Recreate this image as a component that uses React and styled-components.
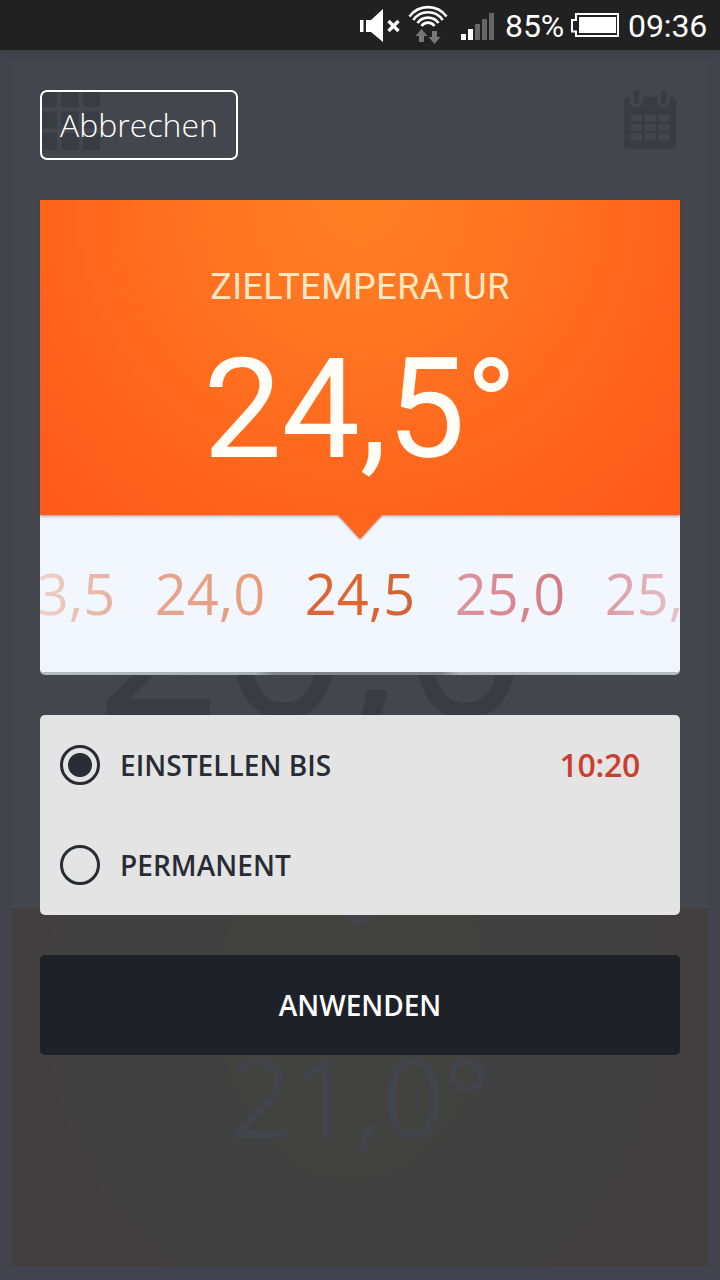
import React from "react";
import styled, { createGlobalStyle } from "styled-components";

const openSans = '"Open Sans", sans-serif';
const roboto = "Roboto, sans-serif";

const GlobalStyle = createGlobalStyle`
  * { box-sizing: border-box; }
  body { margin: 0; background: #42454d; }
  button { font: inherit; border: 0; padding: 0; }
`;

const Screen = styled.div`
  position: relative;
  width: 720px;
  height: 1280px;
  overflow: hidden;
  display: flex;
  flex-direction: column;
  background: #41444c;
  font-family: ${openSans};
`;

const StatusBar = styled.header`
  height: 50px;
  flex: none;
  display: flex;
  align-items: center;
  padding-left: 359px;
  background: #212121;
  color: #fff;
  font: 400 32px/50px ${roboto};
`;

const StatusIcons = styled.svg`
  flex: none;
  display: block;
`;

const StatusText = styled.span`
  flex: none;
  width: ${(p) => p.$width}px;
  padding-left: ${(p) => p.$inset || 0}px;
  padding-top: 3px;
  line-height: 47px;
  letter-spacing: -0.1px;
  white-space: nowrap;
`;

const Body = styled.main`
  position: relative;
  flex: 1;
`;

const Backdrop = styled.div`
  position: absolute;
  inset: 0;
  display: flex;
  flex-direction: column;
  padding: 12px 12px 13px;
  box-shadow: inset 0 5px 5px -3px #3d3f42;
`;

const RoomPanel = styled.section`
  height: 846px;
  flex: none;
  display: flex;
  flex-direction: column;
  border-radius: 6px 6px 0 0;
  background: #43464d;
  color: #393c43;
`;

const RoomToolbar = styled.div`
  display: flex;
  justify-content: space-between;
  padding: 28px 32px 0 28px;
`;

const RoomTemperature = styled.div`
  margin: 351px 0 0 84px;
  font-size: 220px;
  line-height: 260px;
  letter-spacing: -0.5px;
`;

const TargetPanel = styled.section`
  position: relative;
  flex: 1;
  background:
    radial-gradient(ellipse 135px 182px at 341px 92px, #42423f 96%, transparent 100%),
    radial-gradient(ellipse 310px 330px at 346px 92px, #414141 97%, #433f40 103%);
  color: #42444b;
  text-align: center;
`;

const PanelTip = styled.svg`
  position: absolute;
  left: 322px;
  top: 0;
`;

const TargetGhost = styled.div`
  padding-top: 112px;
  font-size: 110px;
  font-weight: 400;
  line-height: 150px;
  letter-spacing: -0.8px;
`;

const Dialog = styled.div`
  position: relative;
  display: flex;
  flex-direction: column;
  align-items: stretch;
  padding: 40px 40px 0;
`;

const CancelButton = styled.button`
  align-self: flex-start;
  width: 198px;
  height: 70px;
  margin-bottom: 40px;
  border: 2px solid #fff;
  border-radius: 7px;
  background: transparent;
  color: #fff;
  font: 300 32px/66px ${openSans};
`;

const Picker = styled.section`
  height: 475px;
  margin-bottom: 40px;
  display: flex;
  flex-direction: column;
`;

const PickerHead = styled.div`
  position: relative;
  height: 315px;
  flex: none;
  display: flex;
  flex-direction: column;
  align-items: center;
  background: radial-gradient(ellipse 420px 420px at 50% 0, #ff8024 0, #ff6c1f 55%, #ff5a1a 100%);
  box-shadow: 0 1px 3px rgba(110, 50, 30, 0.55);
`;

const PickerTitle = styled.h1`
  margin: 65px 0 0;
  color: #ffe9c4;
  font: 400 36px/44px ${roboto};
  letter-spacing: 0.45px;
`;

const PickerValue = styled.div`
  margin-top: 18px;
  color: #fffdf5;
  font: 400 140px/164px ${roboto};
  letter-spacing: -0.5px;
`;

const Pointer = styled.svg`
  position: absolute;
  left: 296px;
  top: 315px;
  filter: drop-shadow(0 1px 1px rgba(110, 50, 30, 0.5));
`;

const PickerTrack = styled.div`
  height: 160px;
  border-radius: 0 0 5px 5px;
  padding-bottom: 3px;
  overflow: hidden;
  background: linear-gradient(90deg, #b6bac2 0, #a9adb5 215px, #80838b 235px, #80838b 400px, #aeb1b9 420px, #b6bac2 100%);
`;

const PickerSurface = styled.div`
  height: 157px;
  background: #f2f6ff;
  border-radius: 0 0 3px 3px;
`;

const PickerStrip = styled.div`
  height: 157px;
  display: flex;
  justify-content: center;
  background: linear-gradient(
    90deg,
    #f0d0c8 0,
    #e6b2a2 70px,
    #e5a58f 120px,
    #e99c7a 220px,
    #d9663a 266px,
    #e2652c 310px,
    #cf6537 374px,
    #dd969e 416px,
    #d27a82 524px,
    #dc9ba3 566px,
    #e7c2ca 640px
  );
  background-clip: text;
  -webkit-background-clip: text;
  color: transparent;
`;

const PickerItem = styled.span`
  flex: 0 0 150px;
  text-align: center;
  font-size: 56px;
  line-height: 157px;
`;

const Options = styled.section`
  height: 200px;
  margin-bottom: 40px;
  border-radius: 5px;
  background: #e4e4e4;
  color: #282c34;
`;

const Option = styled.label`
  height: 100px;
  display: flex;
  align-items: center;
  padding: 0 40px 0 20px;
  font-size: 28px;
  font-weight: 600;
`;

const Radio = styled.span`
  width: 40px;
  height: 40px;
  margin-right: 20px;
  border: 3px solid #282c34;
  border-radius: 50%;
  background: ${(p) => (p.$checked ? "radial-gradient(circle, #282c34 11.5px, transparent 12.5px)" : "none")};
`;

const OptionLabel = styled.span`
  flex: 1;
  letter-spacing: 0.05px;
`;

const OptionTime = styled.span`
  color: #c9402f;
  font-size: 32px;
  letter-spacing: -0.3px;
  line-height: 42px;
`;

const ApplyButton = styled.button`
  height: 100px;
  border-radius: 5px;
  background: #1e2128;
  color: #fff;
  font: 600 28px/100px ${openSans};
`;

const NotificationIcons = () => (
  <StatusIcons width="146" height="50" viewBox="359 0 146 50" fill="#fff">
    <path d="M360 20h3.5v12H360zM366 20h5L383 9v33L371 32h-5z" />
    <path d="M388.5 21l10 10M398.5 21l-10 10" stroke="#fff" strokeWidth="3.4" />
    <g fill="none" stroke="#fff" strokeWidth="2.7">
      <path d="M409.5 16.5a22.8 22.8 0 0 1 37 0" />
      <path d="M413.3 20a17.8 17.8 0 0 1 29.4 0" />
      <path d="M417.5 23.1a12.7 12.7 0 0 1 21 0" />
      <path d="M421.5 26a8 8 0 0 1 13 0" />
    </g>
    <g fill="#777">
      <path d="M421.5 29l6 7h-3.5v6h-5v-6h-3.5zM434.5 44l-6-7h3.5v-6h5v6h3.5z" />
    </g>
    <path d="M461 34h5v6h-5zM468 29h5v11h-5z" />
    <path fill="#666" d="M475 24h5v16h-5zM482 19h5v21h-5zM489 13h5v27h-5z" />
  </StatusIcons>
);

const BatteryIcon = () => (
  <StatusIcons width="49" height="50" viewBox="570 0 49 50">
    <path d="M576 14h42v22h-42v-4.5h-4v-11.500h4z" fill="none" stroke="#fff" strokeWidth="2" />
    <path d="M579 17h37v16h-37z" fill="#fff" />
  </StatusIcons>
);

const GridIcon = () => (
  <svg width="60" height="60" fill="currentColor">
    {[0, 21.500, 43].map((y) =>
      [0, 21.500, 43].map((x) => <rect key={`${x}-${y}`} x={x} y={y} width="17" height="17" />)
    )}
  </svg>
);

const CalendarIcon = () => (
  <svg width="52" height="60" viewBox="0 0 52 60">
    <path
      fill="currentColor"
      d="M4 7h2v4a6.500 6.500 0 0 0 13 0V7h14v4a6.500 6.500 0 0 0 13 0V7h2q4 1 4 4v44q0 4-4 4H4q-4 0-4-4V11q0-3 4-4z"
    />
    <path stroke="currentColor" strokeWidth="5.500" strokeLinecap="round" d="M12.500 2v9.500M39.500 2v9.500" />
    <path
      fill="#43464d"
      d="M7 24.500h11v7H7zm13.500 0h11v7h-11zm14 0h11v7h-11zM7 34h11v7H7zm13.500 0h11v7h-11zm14 0h11v7h-11zM7 43.500h11v7H7zm13.500 0h11v7h-11zm14 0h11v7h-11z"
    />
  </svg>
);

const temperatures = ["23,5", "24,0", "24,5", "25,0", "25,5"];

export default function App() {
  return (
    <Screen>
      <GlobalStyle />
      <StatusBar>
        <NotificationIcons />
        <StatusText $width={65}>85%</StatusText>
        <BatteryIcon />
        <StatusText $width={92} $inset={9}>09:36</StatusText>
      </StatusBar>
      <Body>
        <Backdrop aria-hidden="true">
          <RoomPanel>
            <RoomToolbar>
              <GridIcon />
              <CalendarIcon />
            </RoomToolbar>
            <RoomTemperature>20,0</RoomTemperature>
          </RoomPanel>
          <TargetPanel>
            <PanelTip width="48" height="21" fill="#42444b">
              <path d="M0 0h48L24 21z" />
            </PanelTip>
            <TargetGhost>21,0°</TargetGhost>
          </TargetPanel>
        </Backdrop>
        <Dialog role="dialog">
          <CancelButton>Abbrechen</CancelButton>
          <Picker>
            <PickerHead>
              <PickerTitle>ZIELTEMPERATUR</PickerTitle>
              <PickerValue>24,5°</PickerValue>
              <Pointer width="48" height="26" fill="#ff651d">
                <path d="M2 0h44L24 24z" />
              </Pointer>
            </PickerHead>
            <PickerTrack>
              <PickerSurface>
                <PickerStrip>
                  {temperatures.map((t) => (
                    <PickerItem key={t}>{t}</PickerItem>
                  ))}
                </PickerStrip>
              </PickerSurface>
            </PickerTrack>
          </Picker>
          <Options>
            <Option>
              <Radio $checked />
              <OptionLabel>EINSTELLEN BIS</OptionLabel>
              <OptionTime>10:20</OptionTime>
            </Option>
            <Option>
              <Radio />
              <OptionLabel>PERMANENT</OptionLabel>
            </Option>
          </Options>
          <ApplyButton>ANWENDEN</ApplyButton>
        </Dialog>
      </Body>
    </Screen>
  );
}
